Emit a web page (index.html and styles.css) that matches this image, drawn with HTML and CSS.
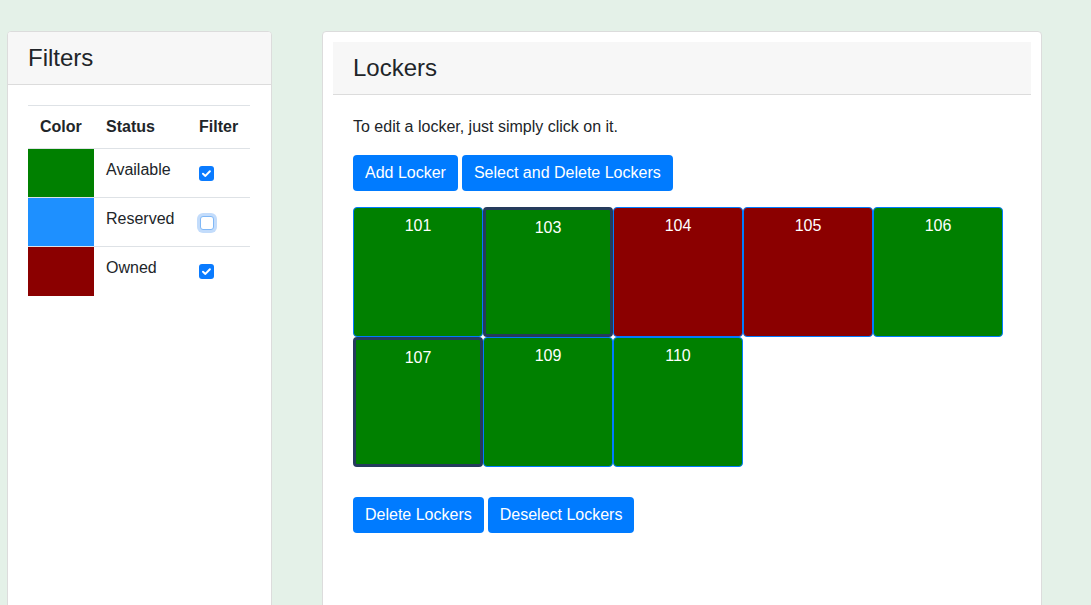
FILE: index.html
```html
<!DOCTYPE html>
<html lang="en">
<head>
<meta charset="utf-8">
<title>Lockers</title>
<link rel="stylesheet" href="styles.css">
</head>
<body>
<div class="page">
  <aside class="card filters">
    <div class="card-header"><h4 class="card-title">Filters</h4></div>
    <div class="card-body">
      <table class="ftable">
        <thead>
          <tr><th class="col-color">Color</th><th class="col-status">Status</th><th class="col-filter">Filter</th></tr>
        </thead>
        <tbody>
          <tr>
            <td class="swatch green"></td>
            <td class="txt">Available</td>
            <td class="chk"><span class="cb checked"><svg width="15" height="15" viewBox="0 0 15 15"><path d="M4 7.7 L6.4 9.9 L10.9 5.2" fill="none" stroke="#fff" stroke-width="2" stroke-linecap="round" stroke-linejoin="round"/></svg></span></td>
          </tr>
          <tr>
            <td class="swatch blue"></td>
            <td class="txt">Reserved</td>
            <td class="chk"><span class="cb focused"></span></td>
          </tr>
          <tr>
            <td class="swatch red"></td>
            <td class="txt">Owned</td>
            <td class="chk"><span class="cb checked"><svg width="15" height="15" viewBox="0 0 15 15"><path d="M4 7.7 L6.4 9.9 L10.9 5.2" fill="none" stroke="#fff" stroke-width="2" stroke-linecap="round" stroke-linejoin="round"/></svg></span></td>
          </tr>
        </tbody>
      </table>
    </div>
  </aside>

  <main class="card lockers">
    <div class="card-header"><h4 class="card-title">Lockers</h4></div>
    <div class="card-body">
      <p class="intro">To edit a locker, just simply click on it.</p>
      <div class="btn-row top">
        <button class="btn">Add Locker</button>
        <button class="btn">Select and Delete Lockers</button>
      </div>
      <div class="grid">
        <div class="locker available">101</div>
        <div class="locker available selected">103</div>
        <div class="locker owned">104</div>
        <div class="locker owned">105</div>
        <div class="locker available">106</div>
        <div class="locker available selected">107</div>
        <div class="locker available">109</div>
        <div class="locker available">110</div>
      </div>
      <div class="btn-row">
        <button class="btn">Delete Lockers</button>
        <button class="btn">Deselect Lockers</button>
      </div>
    </div>
  </main>
</div>
</body>
</html>
```

FILE: styles.css
```css
* { box-sizing: border-box; }

html, body {
  margin: 0;
  background: #e4f1e8;
  font-family: "Liberation Sans", Arial, sans-serif;
  font-size: 16px;
  line-height: 24px;
  color: #212529;
}

.page {
  display: flex;
  align-items: flex-start;
  gap: 50px;
  padding: 31px 0 0 7px;
}

.card {
  background: #fff;
  border: 1px solid #dcdcdc;
  border-radius: 4px;
  min-height: 700px;
}

.filters { width: 265px; }

.lockers {
  width: 720px;
  padding: 10px;
}

.card-header {
  background: #f7f7f7;
  border-bottom: 1px solid #dcdcdc;
  padding: 12px 20px;
}

.filters .card-header { border-radius: 3px 3px 0 0; }

.card-title {
  margin: 0;
  font-size: 24px;
  line-height: 28px;
  font-weight: 400;
}

.card-body { padding: 20px; }

/* filter table */
.ftable {
  border-collapse: collapse;
  width: 222px;
  table-layout: fixed;
}

.ftable th,
.ftable td {
  border-top: 1px solid #dee2e6;
  text-align: left;
  vertical-align: top;
  padding: 9px 12px;
}

.ftable th { font-weight: 700; }

.col-color { width: 66px; }
.col-status { width: 93px; }
.col-filter { width: 63px; }

.ftable td.swatch {
  padding: 0;
  height: 49px;
}

.green { background: #008000; }
.blue { background: #1e90ff; }
.red { background: #8b0000; }

.ftable td.chk { padding-top: 16px; }

.cb {
  display: block;
  width: 15px;
  height: 15px;
  border-radius: 3px;
}

.cb svg { display: block; }

.cb.checked { background: #0a7bff; margin-top: 1px; }

.cb.focused {
  width: 14px;
  height: 14px;
  background: #fff;
  border: 1px solid #80b8f7;
  box-shadow: 0 0 0 3px #c3dcfb;
  margin: 2px 0 0 1px;
}

/* lockers */
.intro { margin: 0 0 16px; }

.btn-row {
  display: flex;
  gap: 4px;
}

.btn-row.top { margin-bottom: 16px; }

.btn {
  background: #007bff;
  color: #fff;
  border: 0;
  border-radius: 4px;
  padding: 6px 12px;
  font-family: "Liberation Sans", Arial, sans-serif;
  font-size: 16px;
  line-height: 24px;
  cursor: pointer;
}

.grid {
  display: flex;
  flex-wrap: wrap;
  margin-bottom: 30px;
}

.locker {
  width: 130px;
  height: 130px;
  border: 1px solid #007bff;
  border-radius: 4px;
  color: #fff;
  text-align: center;
  padding-top: 6px;
}

.locker.available { background: #008000; }
.locker.owned { background: #8b0000; }

.locker.selected { border: 3px solid #253b5c; }
```
